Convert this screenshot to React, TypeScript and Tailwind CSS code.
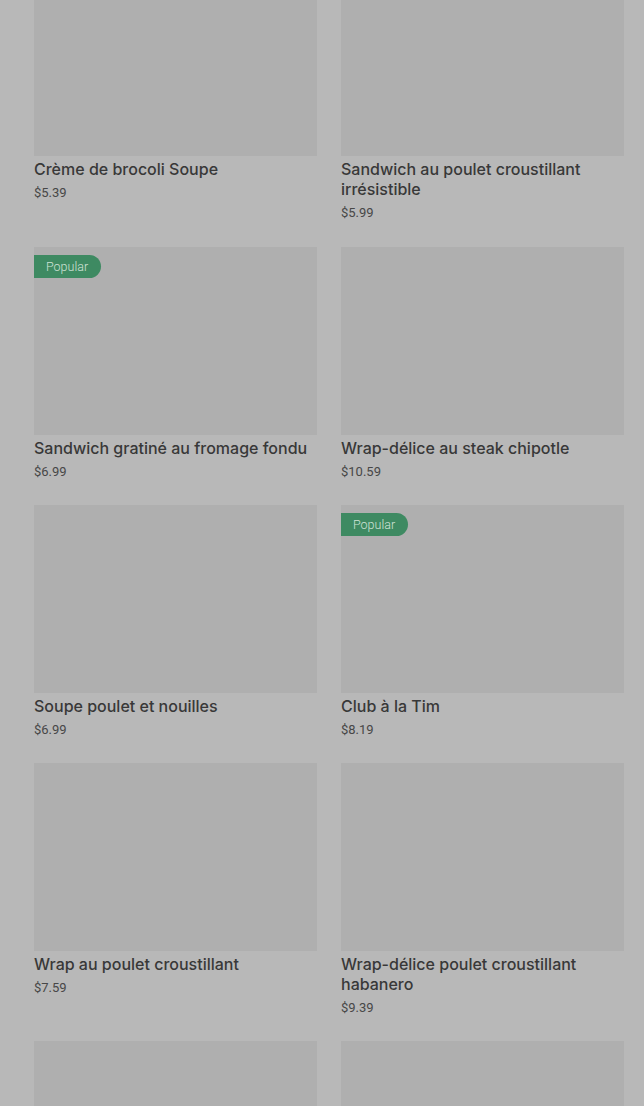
import React from "react";

type Item = { name: string; price: string; popular?: boolean };

const items: Item[] = [
  { name: "Crème de brocoli Soupe", price: "$5.39", popular: true },
  { name: "Sandwich au poulet croustillant irrésistible", price: "$5.99" },
  { name: "Sandwich gratiné au fromage fondu", price: "$6.99", popular: true },
  { name: "Wrap-délice au steak chipotle", price: "$10.59" },
  { name: "Soupe poulet et nouilles", price: "$6.99" },
  { name: "Club à la Tim", price: "$8.19", popular: true },
  { name: "Wrap au poulet croustillant", price: "$7.59" },
  { name: "Wrap-délice poulet croustillant habanero", price: "$9.39" },
  { name: "Sandwich", price: "$0.00" },
  { name: "Sandwich", price: "$0.00" },
];

function Card({ item }: { item: Item }) {
  return (
    <div className="flex flex-col">
      <div className="relative h-[188px] bg-[#afafaf]">
        {item.popular && (
          <div
            className="absolute left-0 top-[8px] h-[23px] pl-[12px] pr-[13px] rounded-r-full bg-[#3e8a62] text-[#cfe2d6] text-[12.5px] leading-[23px] font-light"
            style={{ fontFamily: "Roboto, sans-serif" }}
          >
            Popular
          </div>
        )}
      </div>
      <div
        className="mt-[3px] text-[16px] leading-[20px] font-medium text-[#383838]"
        style={{ fontFamily: "Inter, Roboto, sans-serif" }}
      >
        {item.name}
      </div>
      <div className="mt-[4px] text-[13px] leading-[20px] text-[#474747]">{item.price}</div>
    </div>
  );
}

export default function App() {
  return (
    <div
      className="w-[644px] h-[1106px] overflow-hidden bg-[#b8b8b8]"
      style={{ fontFamily: "Roboto, 'Liberation Sans', sans-serif" }}
    >
      <div className="-mt-[32px] pl-[34px] pr-[20px] grid grid-cols-2 gap-x-[24px] gap-y-[24px]">
        {items.slice(0, 2).map((it, i) => (
          <Card key={i} item={it} />
        ))}
      </div>
      <div className="mt-[24px] pl-[34px] pr-[20px] grid grid-cols-2 gap-x-[24px] gap-y-[23px]">
        {items.slice(2).map((it, i) => (
          <Card key={i} item={it} />
        ))}
      </div>
    </div>
  );
}
